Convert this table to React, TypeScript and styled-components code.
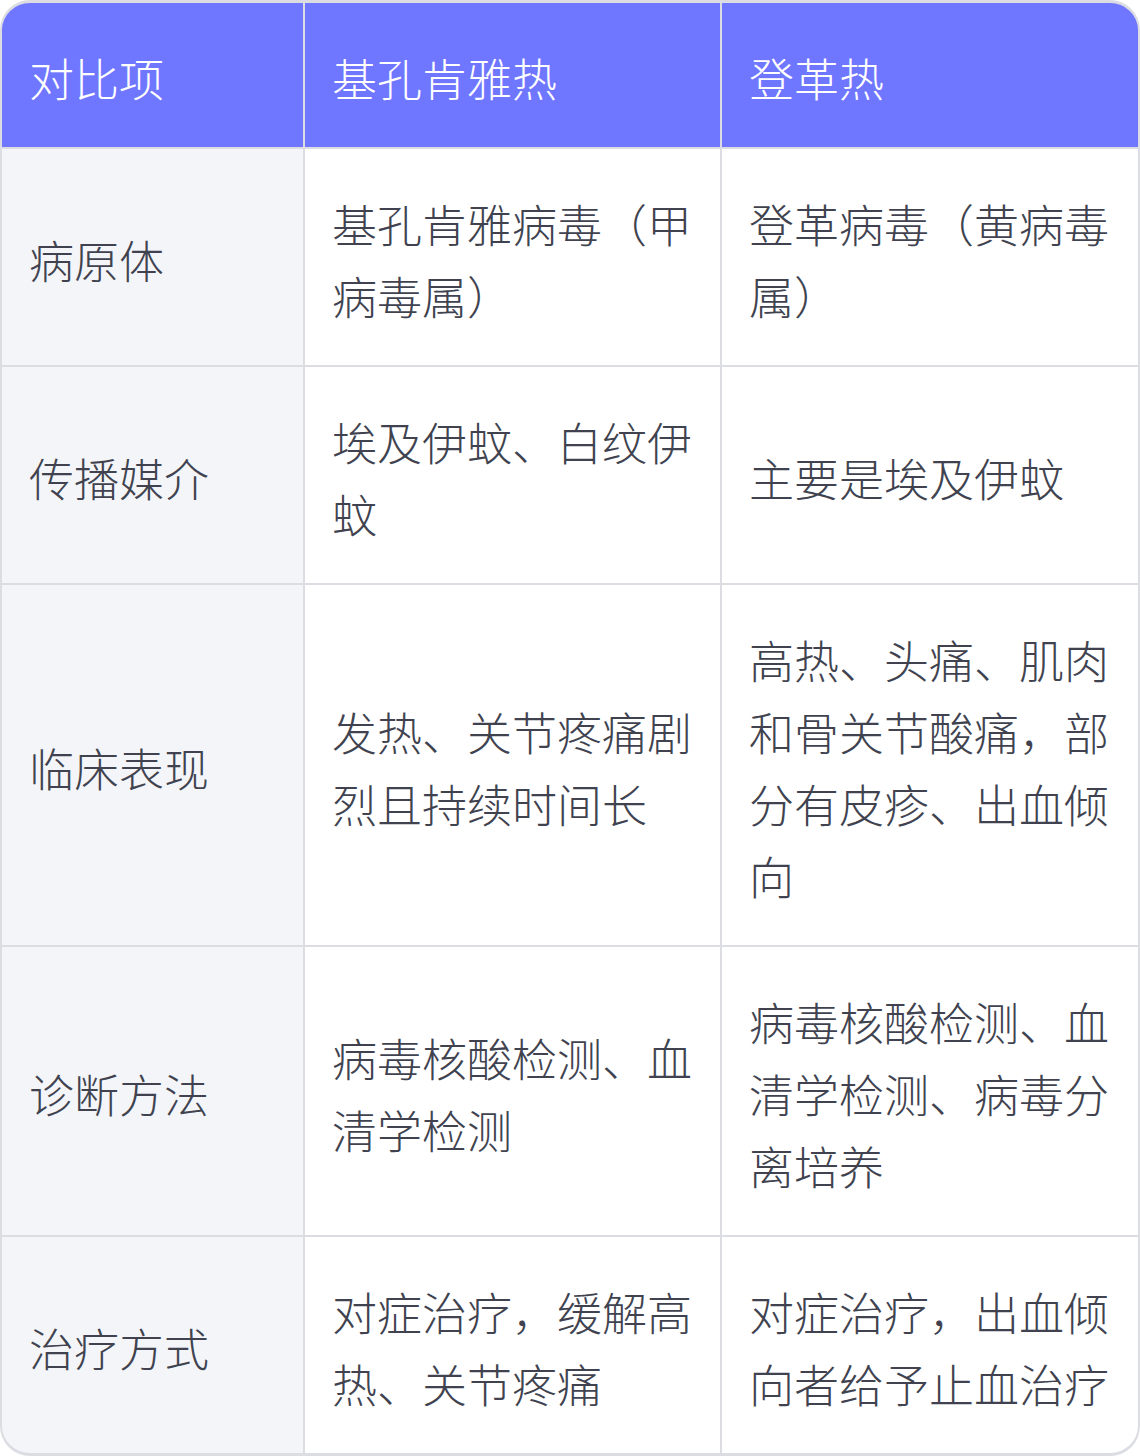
import React from "react";
import styled, { createGlobalStyle } from "styled-components";

const Global = createGlobalStyle`
  html, body { margin: 0; padding: 0; background: #ffffff; }
  body { font-family: "Noto Sans CJK SC", "Noto Sans", sans-serif; }
`;

const Table = styled.div`
  width: 1140px;
  box-sizing: border-box;
  display: grid;
  grid-template-columns: 301px 415px 416px;
  gap: 2px;
  background: #dcdde3;
  border-style: solid;
  border-color: #dcdde3;
  border-width: 3px 2px;
  border-radius: 30px;
  overflow: hidden;
`;

const Cell = styled.div<{ $variant: "head" | "label" | "body" }>`
  display: flex;
  align-items: center;
  box-sizing: border-box;
  padding: 39px 27px 33px 27px;
  font-family: "Noto Sans CJK SC", sans-serif;
  font-size: 45px;
  line-height: 72px;
  font-weight: 300;
  word-break: break-all;
  color: ${(p) => (p.$variant === "head" ? "#ffffff" : "#40434f")};
  background: ${(p) =>
    p.$variant === "head" ? "#6f76ff" : p.$variant === "label" ? "#f4f5f9" : "#ffffff"};
`;

const headers = ["对比项", "基孔肯雅热", "登革热"];

const rows: [string, string, string][] = [
  ["病原体", "基孔肯雅病毒（甲病毒属）", "登革病毒（黄病毒属）"],
  ["传播媒介", "埃及伊蚊、白纹伊蚊", "主要是埃及伊蚊"],
  ["临床表现", "发热、关节疼痛剧烈且持续时间长", "高热、头痛、肌肉和骨关节酸痛，部分有皮疹、出血倾向"],
  ["诊断方法", "病毒核酸检测、血清学检测", "病毒核酸检测、血清学检测、病毒分离培养"],
  ["治疗方式", "对症治疗，缓解高热、关节疼痛", "对症治疗，出血倾向者给予止血治疗"],
];

export default function App() {
  return (
    <>
      <Global />
      <Table role="table">
        {headers.map((h) => (
          <Cell key={h} $variant="head" role="columnheader">
            {h}
          </Cell>
        ))}
        {rows.map((r) => (
          <React.Fragment key={r[0]}>
            <Cell $variant="label" role="rowheader">{r[0]}</Cell>
            <Cell $variant="body" role="cell">{r[1]}</Cell>
            <Cell $variant="body" role="cell">{r[2]}</Cell>
          </React.Fragment>
        ))}
      </Table>
    </>
  );
}
